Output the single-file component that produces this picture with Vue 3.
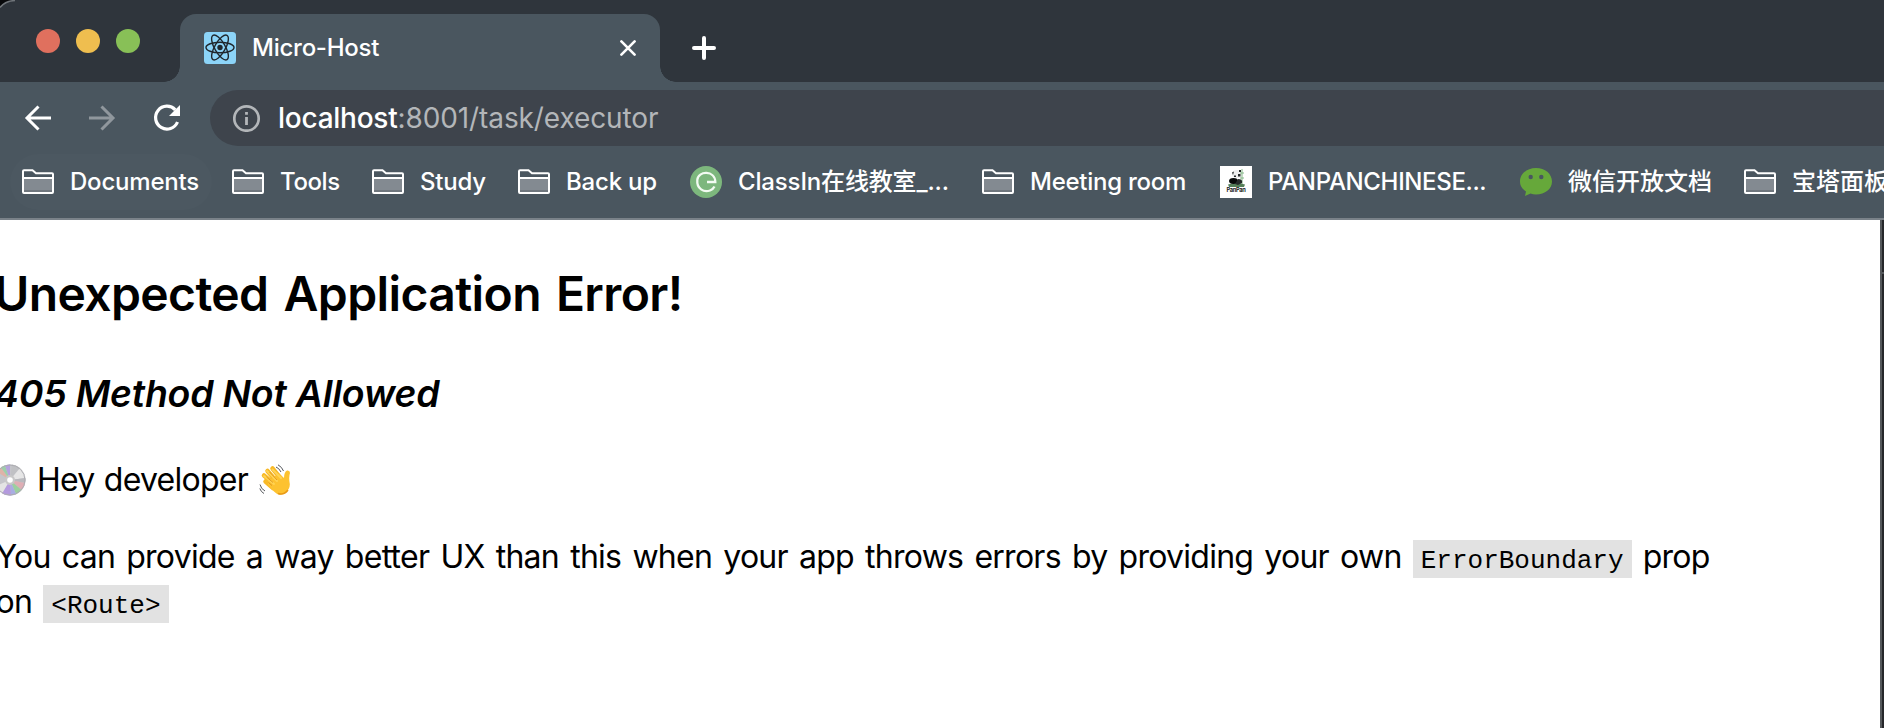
<script setup>
const bookmarks = [
  { label: 'Documents', icon: 'folder', width: 210, spacing: -0.2, hovered: true },
  { label: 'Tools', icon: 'folder', width: 140, spacing: -0.4 },
  { label: 'Study', icon: 'folder', width: 146, spacing: -0.2 },
  { label: 'Back up', icon: 'folder', width: 172, spacing: -0.2 },
  { label: 'ClassIn在线教室_...', icon: 'classin', width: 292, spacing: -0.15 },
  { label: 'Meeting room', icon: 'folder', width: 238, spacing: -0.25 },
  { label: 'PANPANCHINESE...', icon: 'panpan', width: 300, spacing: -0.35 },
  { label: '微信开放文档', icon: 'wechat', width: 224, spacing: 0 },
  { label: '宝塔面板', icon: 'folder', width: 200, spacing: 0 },
]
</script>

<template>
  <div class="window">
    <header class="tabstrip">
      <svg class="corner" width="16" height="10" viewBox="0 0 16 10">
        <path d="M0 0H14Q5 1 0 7Z" fill="#08090b" />
        <path d="M15 .5Q5 1 0 7.500" fill="none" stroke="#70757a" stroke-width="1.500" />
      </svg>
      <div class="lights"><i class="red"></i><i class="yellow"></i><i class="green"></i></div>
      <div class="tab">
        <svg width="32" height="32" viewBox="0 0 32 32">
          <rect width="32" height="32" rx="3.500" fill="#8cd4f8" />
          <g fill="none" stroke="#20272d" stroke-width="1.400">
            <ellipse cx="16" cy="15.500" rx="14" ry="5.300" />
            <ellipse cx="16" cy="15.500" rx="14" ry="5.300" transform="rotate(60 16 15.500)" />
            <ellipse cx="16" cy="15.500" rx="14" ry="5.300" transform="rotate(120 16 15.500)" />
          </g>
          <circle cx="16" cy="15.500" r="2.700" fill="#20272d" />
        </svg>
        <span class="tab-title">Micro-Host</span>
        <svg class="close" width="16" height="16" viewBox="0 0 16 16">
          <path d="M1.400 1.400 14.600 14.600M14.600 1.400 1.400 14.600" stroke="#fff" stroke-width="2.600" stroke-linecap="round" />
        </svg>
      </div>
      <svg class="plus" width="24" height="24" viewBox="0 0 24 24">
        <path d="M12 2V22M2 12H22" stroke="#fff" stroke-width="4" stroke-linecap="round" />
      </svg>
    </header>

    <nav class="toolbar">
      <svg class="nav back" width="28" height="28" viewBox="0 0 28 28">
        <path d="M27 14H3.500M14.500 2.500 3 14 14.500 25.500" fill="none" stroke="#fff" stroke-width="3" />
      </svg>
      <svg class="nav forward" width="28" height="28" viewBox="0 0 28 28">
        <path d="M0 14H23.500M12.500 2.500 24 14 12.500 25.500" fill="none" stroke="#90979d" stroke-width="3" />
      </svg>
      <svg class="nav reload" width="28" height="28" viewBox="0 0 28 28">
        <path d="M22.300 5.800A11.400 11.400 0 1 0 24.500 18" fill="none" stroke="#fff" stroke-width="3.200" />
        <path d="M27 1V12H16Z" fill="#fff" />
      </svg>
      <div class="address">
        <svg width="28" height="28" viewBox="0 0 28 28">
          <circle cx="13.500" cy="14.500" r="12.200" fill="none" stroke="#b3b6b9" stroke-width="2.700" />
          <path d="M12.100 8H14.900V10.800H12.100ZM12.100 13H14.900V21H12.100Z" fill="#b3b6b9" />
        </svg>
        <span class="url"><b>localhost</b>:8001/task/executor</span>
      </div>
    </nav>

    <nav class="bookmarks">
      <a v-for="b in bookmarks" :key="b.label" class="bookmark" :style="{ width: b.width + 'px', letterSpacing: b.spacing + 'px' }">
        <i v-if="b.hovered" class="hover-pill"></i>
        <svg v-if="b.icon === 'folder'" width="32" height="32" viewBox="0 0 32 32">
          <path d="M1 26V4.500H11L14.500 7.500H31V26Z" fill="#4a565f" />
          <path d="M1 12H31V27H1Z" fill="#838a91" />
          <path d="M1 25H31" stroke="#70777e" stroke-width="2" />
          <path d="M1 12H31M2 4.200H10.500L14 7.200H30Q31 7.200 31 8.200V26Q31 27 30 27H2Q1 27 1 26V5.200Q1 4.200 2 4.200Z" fill="none" stroke="#fff" stroke-width="2" />
        </svg>
        <svg v-else-if="b.icon === 'classin'" width="32" height="32" viewBox="0 0 32 32">
          <circle cx="16" cy="16" r="16" fill="#7db77d" />
          <path d="M17 16H25.300C25 4 8 4.500 7.300 14C6.500 23 14 26.500 20 24.500Q23 23.500 24.500 20.500" fill="none" stroke="#f3fbf2" stroke-width="2.300" />
        </svg>
        <svg v-else-if="b.icon === 'panpan'" width="32" height="32" viewBox="0 0 32 32">
          <path d="M0 0H32V32H0Z" fill="#fff" />
          <path d="M12 8Q12 4 17 4Q22 4 22 9Q21 12 17 12Q12 12 12 8Z" fill="#eee" />
          <path d="M12 6.500 14 5.500 13 9ZM18 8H20.500V10.500H18ZM19 4H21V6H19ZM14 9.500H16V11H14Z" fill="#25292a" />
          <path d="M22 3V19M20 7H24M20 12H24" stroke="#86b889" stroke-width="1" />
          <path d="M8 18.500Q16 16 25 18.500L24 21H9Z" fill="#568059" />
          <ellipse cx="13.500" cy="15" rx="4.500" ry="3" fill="#080a0a" />
          <path d="M18 13Q23 13 22 17L18 19 15 18Z" fill="#262b2a" />
          <text x="16" y="26" text-anchor="middle" textLength="19" lengthAdjust="spacingAndGlyphs" class="panpan-text">PanPan</text>
        </svg>
        <svg v-else width="32" height="32" viewBox="0 0 32 32">
          <path d="M16 2C7 2 0 7.800 0 15.500C0 20 2.500 23.200 6 25.500L5 30L10.500 27.600Q13 28.500 16 28.500C25 28.500 32 23 32 15.500C32 7.800 25 2 16 2Z" fill="#66a83a" />
          <circle cx="10.700" cy="11" r="2.200" fill="#4a565f" /><circle cx="21.300" cy="11" r="2.200" fill="#4a565f" />
        </svg>
        <span>{{ b.label }}</span>
      </a>
    </nav>

    <div class="content">
      <main>
        <h2>Unexpected Application Error!</h2>
        <h3>405 Method Not Allowed</h3>
        <p class="hey">
          <svg class="disc" width="32" height="32" viewBox="0 0 32 32">
            <circle cx="16" cy="16" r="15.500" fill="#c5c5ca" />
            <path d="M16 16 18 .500A15.500 15.500 0 0 1 26 4Z" fill="#c0c1c4" />
            <path d="M16 16 26 4A15.500 15.500 0 0 1 31.500 14Z" fill="#e6e6e6" />
            <path d="M16 16 31.500 14A15.500 15.500 0 0 1 31 19Z" fill="#b9b9bd" />
            <path d="M16 16 31 19A15.500 15.500 0 0 1 27.500 26Z" fill="#dfaeb4" />
            <path d="M16 16 27.500 26A15.500 15.500 0 0 1 22 30Z" fill="#9ccf9e" />
            <path d="M16 16 22 30A15.500 15.500 0 0 1 17 31.500Z" fill="#a9aee2" />
            <path d="M16 16 17 31.500A15.500 15.500 0 0 1 8 29.500Z" fill="#b49ade" />
            <path d="M16 16 8 29.500A15.500 15.500 0 0 1 2 22Z" fill="#e4e4e4" />
            <path d="M16 16 3 8A15.500 15.500 0 0 1 7 3.500Z" fill="#dfb3a8" />
            <path d="M16 16 7 3.500A15.500 15.500 0 0 1 11 1.500Z" fill="#9ccfa9" />
            <path d="M16 16 11 1.500A15.500 15.500 0 0 1 16 .500Z" fill="#b5a2dd" />
            <circle cx="16" cy="16" r="15" fill="none" stroke="#adadb2" />
            <circle cx="16" cy="16" r="5" fill="#c8c8c8" /><circle cx="16" cy="16" r="2.800" fill="#fff" />
          </svg>
          <span>Hey developer</span>
          <svg class="wave" width="32" height="32" viewBox="0 0 32 32">
            <g fill="none" stroke="#f8b926" stroke-width="4.500" stroke-linecap="round">
              <path d="M19 19 8.500 7M15 20 5 11.500M23 16 13.500 4.500M14 24 6.500 17.500" />
            </g>
            <path d="M9 17 20 9.500 25 14Q25 8 28 6.500Q31 6 31 9Q29.500 13 30.800 20Q31 25 26 29Q20 33 15 27.500L9 21Z" fill="#fdc230" />
            <path d="M8 7 18 17M5 12 15 20M13.500 5.500 22 14" stroke="#ffd354" stroke-width="2" stroke-linecap="round" fill="none" />
            <path d="M10.500 8 18 16M7.500 13 14 18.500M9.500 18.500 13 21.500" stroke="#d98d16" stroke-width=".8" fill="none" />
            <path d="M19 29.500Q25 31.500 29 26" stroke="#e99a17" stroke-width="1.500" fill="none" />
            <path d="M17 3Q20 4 22 8M19 .800Q23 3 24.500 7M1 20.500Q2 25 6 27M.800 24.500Q2 28 5 29.500" fill="none" stroke="#55585c" stroke-width="1" />
          </svg>
        </p>
        <p class="advice">
          You can provide a way better UX than this when your app throws errors by providing your own <code>ErrorBoundary</code> prop<br />on <code>&lt;Route&gt;</code>
        </p>
      </main>
      <aside><div class="panel-top"></div></aside>
    </div>
  </div>
</template>

<style>
html, body { margin: 0; overflow: hidden; }
</style>

<style scoped>
* { box-sizing: border-box; }
svg { display: block; flex: none; }
.window { width: 1884px; height: 728px; overflow: hidden; display: flex; flex-direction: column; background: #4a565f; font-family: Inter, "Noto Sans CJK SC", sans-serif; }
.tabstrip { position: relative; height: 82px; flex: none; display: flex; background: #2f353c; }
.corner { position: absolute; left: 0; top: 0; }
.lights { display: flex; gap: 16px; width: 180px; padding: 29px 0 0 36px; }
.lights i { width: 24px; height: 24px; border-radius: 50%; }
.red { background: #e0705e; }
.yellow { background: #efbe4f; }
.green { background: #88c057; }
.tab { position: relative; display: flex; align-items: center; width: 480px; height: 68px; margin-top: 14px; padding: 0 24px; background: #4a565f; border-radius: 16px 16px 0 0; }
.tab::before, .tab::after { content: ""; position: absolute; bottom: 0; width: 16px; height: 16px; }
.tab::before { left: -16px; background: radial-gradient(circle at 0 0, transparent 15.500px, #4a565f 16px); }
.tab::after { right: -16px; background: radial-gradient(circle at 100% 0, transparent 15.500px, #4a565f 16px); }
.tab-title { margin-left: 16px; font-size: 24px; font-weight: 450; line-height: 32px; letter-spacing: -.25px; color: #fff; }
.close { margin-left: auto; }
.plus { margin: 36px 0 0 32px; }
.toolbar { height: 70px; flex: none; display: flex; align-items: center; padding: 2px 0 0 24px; }
.nav { margin-top: -1px; }
.forward { margin-left: 37px; }
.reload { margin-left: 36px; }
.address { flex: 1; display: flex; align-items: center; height: 56px; margin: 0 -20px 0 29px; padding-left: 23px; border-radius: 28px 0 0 28px; background: #3e444c; }
.url { margin-left: 17px; font-size: 28px; font-weight: 430; letter-spacing: -.1px; color: #b3b6b9; white-space: nowrap; }
.url b { font-weight: 450; letter-spacing: -.25px; color: #fff; }
.bookmarks { height: 68px; flex: none; display: flex; padding: 2px 0 0 10px; border-bottom: 2px solid #7a8289; overflow: hidden; }
.bookmark { position: relative; display: flex; flex: none; align-items: center; height: 56px; padding-left: 12px; color: #fff; font-size: 24px; font-weight: 450; white-space: nowrap; }
.bookmark svg, .bookmark span { position: relative; }
.hover-pill { position: absolute; left: 0; top: 0; width: 202px; height: 56px; border-radius: 28px; background: #4c5861; }
.bookmark span { margin-left: 16px; line-height: 32px; }
.panpan-text { font: 700 6px Inter, sans-serif; fill: #222; }
.content { flex: 1; display: flex; background: #fff; color: #000; }
main { flex: 1; }
aside { width: 4px; background: #26272a; border-left: 2px solid #55585b; }
.panel-top { height: 54px; border-bottom: 2px solid #55585b; }
h2 { margin: 44px 0 0 -6px; font-size: 48px; line-height: 60px; font-weight: 600; letter-spacing: -.6px; word-spacing: 3.5px; white-space: nowrap; }
h3 { margin: 45px 0 0 -6px; font-size: 37.440px; line-height: 50px; font-weight: 600; font-style: italic; letter-spacing: -.2px; white-space: nowrap; }
p { margin: 0; font-size: 32px; line-height: 45px; letter-spacing: -.74px; word-spacing: 2.9px; }
.hey { display: flex; align-items: center; margin-top: 38px; }
.disc { margin-left: -6px; }
.hey span { margin-left: 11px; width: 222px; word-spacing: 1px; white-space: nowrap; }
.advice { margin: 32px 0 0 -4.5px; white-space: nowrap; }
code { padding: 6px 8px 2px; background: #e2e2e2; font: 26px/1 "Liberation Mono", monospace; letter-spacing: 0; word-spacing: 0; }
</style>
